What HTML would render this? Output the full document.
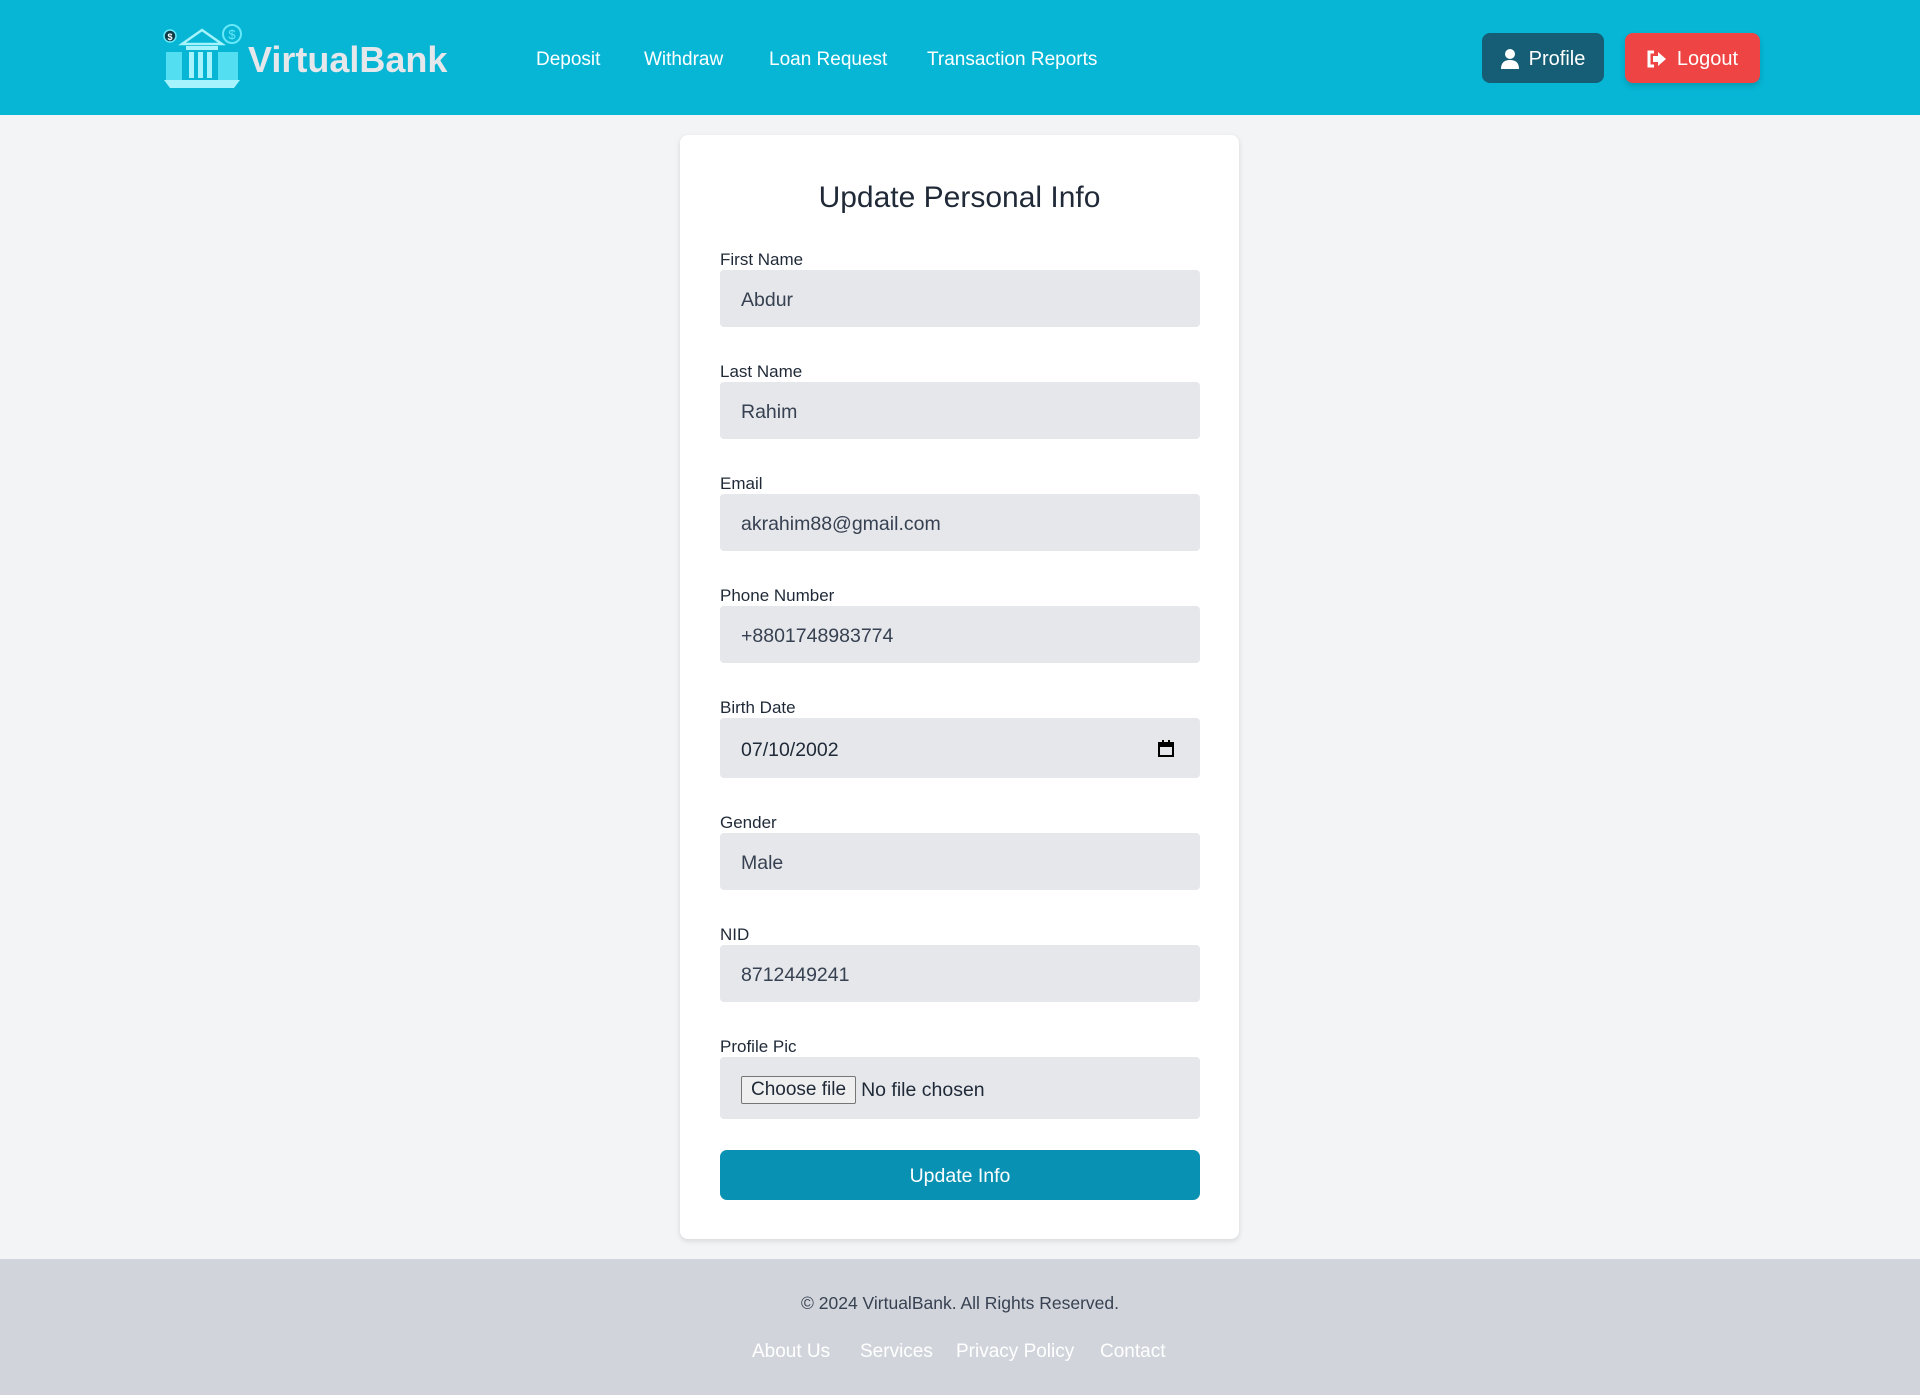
<!DOCTYPE html>
<html><head><meta charset="utf-8"><style>
*{box-sizing:border-box;margin:0;padding:0}
body{width:1920px;height:1395px;background:#f3f4f6;font-family:"Liberation Sans",sans-serif;position:relative;overflow:hidden;color:#1f2937}
.hdr{position:absolute;left:0;top:0;width:1920px;height:115px;background:#06b6d4}
.nav{position:absolute;top:49px;color:#fff;font-size:19px}
.btn{position:absolute;top:33px;height:50px;border-radius:8px;color:#fff;font-size:20px;display:flex;align-items:center;justify-content:center;gap:10px;padding-top:2px}
.card{position:absolute;left:680px;top:135px;width:559px;height:1104px;background:#fff;border-radius:8px;box-shadow:0 2px 6px rgba(0,0,0,.12)}
.lbl{position:absolute;left:720px;font-size:17px;color:#1f2937;margin-top:2px}
.inp{position:absolute;left:720px;width:480px;height:57px;background:#e5e7eb;border-radius:4px;font-size:19.5px;color:#374151;padding-left:21px;padding-top:4px;display:flex;align-items:center}
.foot{position:absolute;left:0;top:1259px;width:1920px;height:136px;background:#d1d5db}
.fl{position:absolute;top:1341px;color:#fff;font-size:19px}
</style></head><body>
<div class="hdr"></div>
<svg style="position:absolute;left:160px;top:24px" width="84" height="66" viewBox="0 0 84 66">
<circle cx="10" cy="12" r="6" fill="#0f3b46" stroke="#67e8f9" stroke-width="1.5"/>
<text x="10" y="16" font-size="9" fill="#fff" text-anchor="middle" font-family="Liberation Sans" font-weight="bold">$</text>
<circle cx="72" cy="10" r="9" fill="none" stroke="#67e8f9" stroke-width="2"/>
<text x="72" y="15" font-size="13" fill="#67e8f9" text-anchor="middle" font-family="Liberation Sans">$</text>
<path d="M22 20 L42 6 L62 20 Z" fill="none" stroke="#a5f3fc" stroke-width="2.5"/>
<rect x="26" y="22" width="32" height="4" fill="#a5f3fc"/>
<rect x="29" y="28" width="5" height="26" fill="#a5f3fc"/><rect x="38" y="28" width="5" height="26" fill="#a5f3fc"/><rect x="47" y="28" width="5" height="26" fill="#a5f3fc"/>
<rect x="6" y="28" width="16" height="28" fill="#67e8f9" opacity=".8"/><rect x="58" y="28" width="20" height="28" fill="#67e8f9" opacity=".8"/>
<path d="M4 56 L80 56 L74 64 L10 64 Z" fill="#a5f3fc"/>
</svg>
<div style="position:absolute;left:248px;top:39px;font-size:36px;font-weight:bold;color:#e5e7eb">VirtualBank</div>
<div class="nav" style="left:536px">Deposit</div>
<div class="nav" style="left:644px">Withdraw</div>
<div class="nav" style="left:769px">Loan Request</div>
<div class="nav" style="left:927px">Transaction Reports</div>
<div class="btn" style="left:1482px;width:122px;background:#155e75"><svg width="18" height="20" viewBox="0 0 18 20"><circle cx="9" cy="5" r="5" fill="#fff"/><path d="M0 20 Q0 11 9 11 Q18 11 18 20 Z" fill="#fff"/></svg>Profile</div>
<div class="btn" style="left:1625px;width:135px;background:#ef4444;box-shadow:0 3px 6px rgba(0,0,0,.15)"><svg width="20" height="18" viewBox="0 0 20 18"><path d="M7 2 H2 V16 H7" fill="none" stroke="#fff" stroke-width="3"/><path d="M6 6 H11 V2 L19 9 L11 16 V12 H6 Z" fill="#fff"/></svg>Logout</div>
<div class="card"></div>
<div style="position:absolute;left:680px;width:559px;top:181px;text-align:center;font-size:30px;color:#1f2937">Update Personal Info</div>
<div class="lbl" style="top:248px">First Name</div><div class="inp" style="top:270px">Abdur</div>
<div class="lbl" style="top:360px">Last Name</div><div class="inp" style="top:382px">Rahim</div>
<div class="lbl" style="top:472px">Email</div><div class="inp" style="top:494px">akrahim88@gmail.com</div>
<div class="lbl" style="top:584px">Phone Number</div><div class="inp" style="top:606px">+8801748983774</div>
<div class="lbl" style="top:696px">Birth Date</div><div class="inp" style="top:718px;height:60px;color:#1f2937">07/10/2002<svg style="position:absolute;right:26px;top:22px" width="16" height="17" viewBox="0 0 16 17"><rect x="1" y="3" width="14" height="13" fill="none" stroke="#000" stroke-width="2"/><rect x="1" y="3" width="14" height="4" fill="#000"/><rect x="4" y="0" width="2" height="4" fill="#000"/><rect x="10" y="0" width="2" height="4" fill="#000"/></svg></div>
<div class="lbl" style="top:811px">Gender</div><div class="inp" style="top:833px">Male</div>
<div class="lbl" style="top:923px">NID</div><div class="inp" style="top:945px">8712449241</div>
<div class="lbl" style="top:1035px">Profile Pic</div><div class="inp" style="top:1057px;height:62px;color:#1f2937"><span style="border:1px solid #767676;background:#efefef;padding:2px 9px;font-size:19px;border-radius:2px">Choose file</span><span style="margin-left:5px">No file chosen</span></div>
<div style="position:absolute;left:720px;top:1150px;width:480px;height:50px;background:#0891b2;border-radius:7px;color:#fff;font-size:19.5px;display:flex;align-items:center;justify-content:center;padding-top:2px">Update Info</div>
<div class="foot"></div>
<div style="position:absolute;left:0;width:1920px;top:1293px;text-align:center;font-size:17.5px;color:#374151">© 2024 VirtualBank. All Rights Reserved.</div>
<div class="fl" style="left:752px">About Us</div>
<div class="fl" style="left:860px">Services</div>
<div class="fl" style="left:956px">Privacy Policy</div>
<div class="fl" style="left:1100px">Contact</div>
</body></html>
